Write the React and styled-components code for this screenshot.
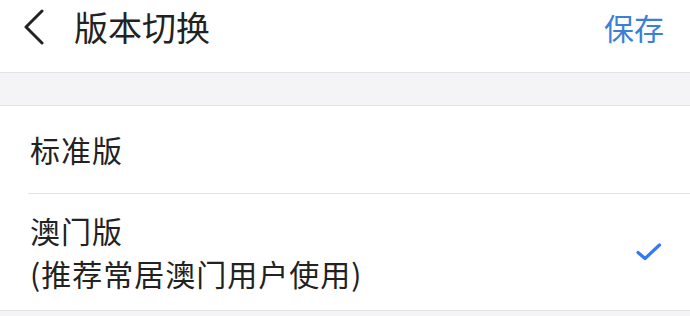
import styled, { createGlobalStyle } from "styled-components";

const GlobalStyle = createGlobalStyle`
body {
  margin: 0;
  background: #f4f4f7;
  font-family: "Noto Sans CJK SC", "Noto Sans", sans-serif;
}
`;

const Page = styled.div`
width: 690px;
min-height: 316px;
background: #f4f4f7;
`;

const Header = styled.header`
height: 73px;
box-sizing: border-box;
padding: 0 26px 19px 22px;
display: flex;
align-items: center;
background: #fff;
border-bottom: 1px solid #e3e3e6;
`;

const BackButton = styled.button`
border: 0;
background: none;
padding: 0;
width: 28px;
height: 36px;
display: flex;
align-items: center;
cursor: pointer;
`;

const Title = styled.h1`
margin: 0 0 0 24px;
flex: 1;
font-size: 34px;
font-weight: 400;
line-height: 40px;
color: #222;
`;

const Save = styled.button`
border: 0;
background: none;
padding: 0;
font-family: inherit;
font-size: 30px;
line-height: 40px;
color: #3b7fd6;
cursor: pointer;
`;

const Gap = styled.div`
height: 32px;
border-bottom: 1px solid #e3e3e6;
`;

const List = styled.ul`
margin: 0;
padding: 0 0 0 28px;
list-style: none;
background: #fff;
border-bottom: 1px solid #e3e3e6;
`;

const Item = styled.li`
display: flex;
align-items: center;
padding: ${(p) => (p.$tall ? "15px" : "22px")} 28px
  ${(p) => (p.$tall ? "15px" : "22px")} 2px;
border-top: ${(p) => (p.$first ? "0" : "1px solid #e3e3e6")};
`;

const Label = styled.div`
flex: 1;
font-size: 30px;
line-height: 43px;
letter-spacing: 1px;
color: #222;
`;

function Check() {
  return (
    <svg width="26" height="20" viewBox="0 0 26 20">
      <path
        d="M2 10.5 L9 16.5 L23.5 3"
        fill="none"
        stroke="#3478f6"
        strokeWidth="3.2"
        strokeLinecap="round"
        strokeLinejoin="round"
      />
    </svg>
  );
}

export default function App() {
  return (
    <Page>
      <GlobalStyle />
      <Header>
        <BackButton aria-label="返回">
          <svg width="24" height="36" viewBox="0 0 24 36">
            <path
              d="M20 2 L4 18 L20 34"
              fill="none"
              stroke="#222"
              strokeWidth="3"
              strokeLinecap="round"
              strokeLinejoin="round"
            />
          </svg>
        </BackButton>
        <Title>版本切换</Title>
        <Save>保存</Save>
      </Header>
      <Gap />
      <List>
        <Item $first>
          <Label>标准版</Label>
        </Item>
        <Item $tall>
          <Label>
            澳门版
            <br />
            (推荐常居澳门用户使用)
          </Label>
          <Check />
        </Item>
      </List>
    </Page>
  );
}
